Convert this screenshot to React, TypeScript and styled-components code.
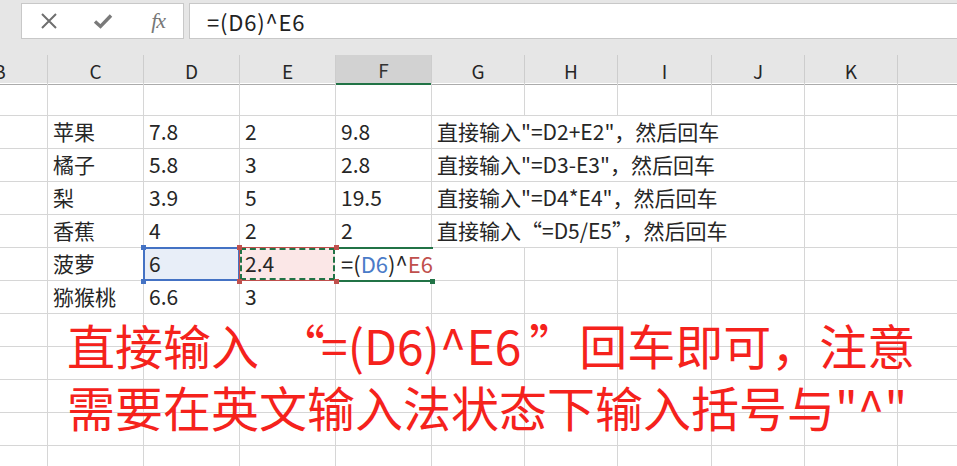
import React from 'react';
import styled, { createGlobalStyle, css } from 'styled-components';

const FONT = `"Noto Sans CJK SC", "Noto Sans", sans-serif`;
const COLS = '96px 96px 96px 96px 96px 93px 93px 94px 93px 93px 100px';
const GRID = '#d6d6d6';
const GREEN = '#217346';
const BLUE = '#4472c4';
const RED = '#c0504d';

const GlobalStyle = createGlobalStyle`
  html, body { margin: 0; padding: 0; background: #fff; overflow: hidden; }
  body { font-family: ${FONT}; }
`;

const Page = styled.div`
  width: 957px;
  height: 466px;
  overflow: hidden;
  position: relative;
  background: #fff;
  font-family: ${FONT};
  color: #222;
`;

const Top = styled.div`
  background: #e6e6e6;
  padding-top: 3px;
`;

const FormulaRow = styled.div`
  display: flex;
  height: 36px;
  gap: 5px;
  padding-left: 21px;
`;

const ButtonsBox = styled.div`
  width: 163px;
  box-sizing: border-box;
  border: 1px solid #c8c8c8;
  background: #fff;
  display: flex;
  align-items: center;
`;

const IconSlot = styled.div`
  flex: 1;
  display: flex;
  align-items: center;
  justify-content: center;
  height: 100%;
  color: #6f6f6f;
`;

const Fx = styled.span`
  font-family: "Liberation Serif", serif;
  font-style: italic;
  font-size: 22px;
  color: #777;
  letter-spacing: -1px;
  transform: translateX(2px);
`;

const FormulaBox = styled.div`
  flex: 1;
  box-sizing: border-box;
  border: 1px solid #c8c8c8;
  border-right: none;
  background: #fff;
  display: flex;
  align-items: center;
  padding-left: 17px;
  font-size: 22px;
  letter-spacing: 0.8px;
  color: #222;
`;

const HeaderRow = styled.div`
  margin-top: 16px;
  margin-left: -48px;
  display: grid;
  grid-template-columns: ${COLS};
  height: 28px;
`;

const HeaderCell = styled.div<{ $active?: boolean }>`
  box-sizing: border-box;
  display: flex;
  align-items: center;
  justify-content: center;
  font-size: 19px;
  color: #262626;
  border-right: 1px solid #cdcdcd;
  border-bottom: 1px solid #ababab;
  padding-top: 1px;
  ${(p) =>
    p.$active &&
    css`
      background: #d2d2d2;
      border-bottom: 2px solid ${GREEN};
      color: #333;
    `}
`;

const Body = styled.div`
  margin-left: -48px;
`;

const Row = styled.div`
  display: grid;
  grid-template-columns: ${COLS};
  height: 33px;
`;

const Cell = styled.div<{ $span?: number; $fill?: string }>`
  position: relative;
  box-sizing: border-box;
  border-right: 1px solid ${GRID};
  border-bottom: 1px solid ${GRID};
  padding: 0 5px 3px 5px;
  display: flex;
  align-items: flex-end;
  font-size: 21px;
  line-height: 28px;
  color: #262626;
  white-space: nowrap;
  ${(p) => p.$span && css`grid-column: span ${p.$span};`}
  ${(p) => p.$fill && css`background: ${p.$fill};`}
`;

const CellText = styled.span`
  position: relative;
  z-index: 2;
`;

const Frame = styled.span<{ $color: string; $dashed?: boolean; $inset: number; $w: number }>`
  position: absolute;
  top: ${(p) => -1 + p.$inset}px;
  left: ${(p) => -1 + p.$inset}px;
  right: ${(p) => -1 + p.$inset}px;
  bottom: ${(p) => -1 + p.$inset}px;
  border: ${(p) => p.$w}px ${(p) => (p.$dashed ? 'dashed' : 'solid')} ${(p) => p.$color};
  pointer-events: none;
  z-index: 3;
`;

const Editor = styled.span`
  position: absolute;
  top: -1px;
  left: -1px;
  right: -2px;
  bottom: -2px;
  border-top: 2px solid ${GREEN};
  border-bottom: 2px solid ${GREEN};
  background: #fff;
  z-index: 4;
  display: flex;
  align-items: flex-end;
  padding: 0 0 3px 6px;
  font-size: 22px;
  line-height: 28px;
  color: #262626;
  white-space: nowrap;
`;

const Ref = styled.span<{ $color: string }>`
  color: ${(p) => p.$color};
`;

const Handle = styled.span<{ $color: string; $x: 'l' | 'r'; $y: 't' | 'b' }>`
  position: absolute;
  width: 5px;
  height: 5px;
  background: ${(p) => p.$color};
  z-index: 6;
  ${(p) => (p.$x === 'l' ? 'left: -3px;' : 'right: -4px;')}
  ${(p) => (p.$y === 't' ? 'top: -3px;' : 'bottom: -4px;')}
`;

const Annotation = styled.div`
  position: absolute;
  left: 67px;
  top: 313px;
  font-family: ${FONT};
  font-size: 48px;
  line-height: 62px;
  color: #f5221c;
  white-space: nowrap;
  z-index: 10;
`;

const Quote = styled.span<{ $w: number; $pad: number }>`
  display: inline-block;
  box-sizing: border-box;
  width: ${(p) => p.$w}px;
  padding-left: ${(p) => p.$pad}px;
  text-align: left;
  overflow: visible;
`;

const CrossIcon = () => (
  <svg width="18" height="18" viewBox="0 0 18 18">
    <path d="M2 2 L16 16 M16 2 L2 16" stroke="#6f6f6f" strokeWidth="2" fill="none" />
  </svg>
);

const CheckIcon = () => (
  <svg width="20" height="16" viewBox="0 0 20 16">
    <path d="M2 8.5 L7.5 13.5 L18 2.5" stroke="#7a7a7a" strokeWidth="3.4" fill="none" strokeLinejoin="miter" />
  </svg>
);

type RowData = { c: string; d: string; e: string; f: string; g?: string };

const rows: RowData[] = [
  { c: '', d: '', e: '', f: '' },
  { c: '苹果', d: '7.8', e: '2', f: '9.8', g: '直接输入"=D2+E2"，然后回车' },
  { c: '橘子', d: '5.8', e: '3', f: '2.8', g: '直接输入"=D3-E3"，然后回车' },
  { c: '梨', d: '3.9', e: '5', f: '19.5', g: '直接输入"=D4*E4"，然后回车' },
  { c: '香蕉', d: '4', e: '2', f: '2', g: '直接输入“=D5/E5”，然后回车' },
];

const letters = ['B', 'C', 'D', 'E', 'F', 'G', 'H', 'I', 'J', 'K', 'L'];

const Blank = ({ n }: { n: number }) => (
  <>
    {Array.from({ length: n }).map((_, i) => (
      <Cell key={i} />
    ))}
  </>
);

export default function App() {
  return (
    <Page>
      <GlobalStyle />
      <Top>
        <FormulaRow>
          <ButtonsBox>
            <IconSlot>
              <CrossIcon />
            </IconSlot>
            <IconSlot>
              <CheckIcon />
            </IconSlot>
            <IconSlot>
              <Fx>fx</Fx>
            </IconSlot>
          </ButtonsBox>
          <FormulaBox>=(D6)^E6</FormulaBox>
        </FormulaRow>
        <HeaderRow>
          {letters.map((l) => (
            <HeaderCell key={l} $active={l === 'F'}>
              {l === 'L' ? '' : l}
            </HeaderCell>
          ))}
        </HeaderRow>
      </Top>
      <Body>
        {rows.map((r, i) => (
          <Row key={i}>
            <Cell />
            <Cell><CellText>{r.c}</CellText></Cell>
            <Cell><CellText>{r.d}</CellText></Cell>
            <Cell><CellText>{r.e}</CellText></Cell>
            <Cell><CellText>{r.f}</CellText></Cell>
            {r.g ? (
              <Cell $span={4}><CellText>{r.g}</CellText></Cell>
            ) : (
              <Blank n={4} />
            )}
            <Blank n={2} />
          </Row>
        ))}
        <Row>
          <Cell />
          <Cell><CellText>菠萝</CellText></Cell>
          <Cell $fill="#e8eef8">
            <CellText>6</CellText>
            <Frame $color={BLUE} $inset={0} $w={2} />
            <Handle $color={BLUE} $x="l" $y="t" />
            <Handle $color={BLUE} $x="l" $y="b" />
          </Cell>
          <Cell $fill="#fbe7e7">
            <CellText>2.4</CellText>
            <Frame $color={RED} $inset={0} $w={1} />
            <Frame $color={GREEN} $dashed $inset={1} $w={2} />
            <Handle $color={RED} $x="l" $y="t" />
            <Handle $color={RED} $x="l" $y="b" />
            <Handle $color={RED} $x="r" $y="t" />
            <Handle $color={RED} $x="r" $y="b" />
          </Cell>
          <Cell>
            <Editor>
              =(<Ref $color="#4a7bc8">D6</Ref>)^<Ref $color="#c0504d">E6</Ref>
            </Editor>
            <Handle $color={GREEN} $x="r" $y="b" />
          </Cell>
          <Blank n={6} />
        </Row>
        <Row>
          <Cell />
          <Cell><CellText>猕猴桃</CellText></Cell>
          <Cell><CellText>6.6</CellText></Cell>
          <Cell><CellText>3</CellText></Cell>
          <Blank n={7} />
        </Row>
        {Array.from({ length: 6 }).map((_, i) => (
          <Row key={'e' + i}>
            <Blank n={11} />
          </Row>
        ))}
      </Body>
      <Annotation>
        <div>
          直接输入<Quote $w={62} $pad={18}>“</Quote>=(D6)^E6<Quote $w={58} $pad={8}>”</Quote>回车即可，注意
        </div>
        <div>需要在英文输入法状态下输入括号与"^"</div>
      </Annotation>
    </Page>
  );
}
